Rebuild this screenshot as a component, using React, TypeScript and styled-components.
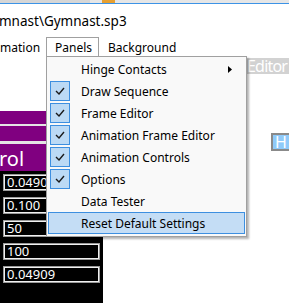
import React from "react";
import styled, { createGlobalStyle } from "styled-components";

const GlobalStyle = createGlobalStyle`
  html, body {
    margin: 0;
    padding: 0;
    background: #ffffff;
  }
  body {
    font-family: "Noto Sans", "Open Sans", sans-serif;
  }
`;

const menuItems = [
  { label: "Hinge Contacts", checked: false, submenu: true },
  { label: "Draw Sequence", checked: true },
  { label: "Frame Editor", checked: true },
  { label: "Animation Frame Editor", checked: true },
  { label: "Animation Controls", checked: true },
  { label: "Options", checked: true },
  { label: "Data Tester", checked: false },
  { label: "Reset Default Settings", checked: false, active: true },
];

const values = ["0.04909", "0.100", "50", "100", "0.04909"];

const Check = () => (
  <svg width="10" height="8" viewBox="0 0 10 8">
    <path d="M1 4 L4 7 L9 1" fill="none" stroke="#1a1a1a" strokeWidth="1.4" />
  </svg>
);

const Arrow = () => (
  <svg width="4" height="7" viewBox="0 0 4 7">
    <path d="M0 0 L4 3.5 L0 7 Z" fill="#000" />
  </svg>
);

const App: React.FC = () => {
  return (
    <>
      <GlobalStyle />
      <Window>
        <TopStrip>
          <StripDark />
          <StripLight>
            <OrangeMark />
          </StripLight>
        </TopStrip>
        <TitleRow>mnast\Gymnast.sp3</TitleRow>
        <MenuBar>
          <MenuBarItem $width={46}>mation</MenuBarItem>
          <MenuBarTab>Panels</MenuBarTab>
          <MenuBarItem>Background</MenuBarItem>
        </MenuBar>
        <Body>
          <LeftColumn>
            <WhiteSpace />
            <PurpleBar $height={13} />
            <BarGap $height={2} />
            <PurpleBar $height={15} />
            <BarGap $height={3} />
            <PurpleBar $height={27}>
              <PurpleText>rol</PurpleText>
            </PurpleBar>
            <BlackPanel>
              {values.map((v, i) => (
                <ValueBox key={i}>{v}</ValueBox>
              ))}
            </BlackPanel>
          </LeftColumn>
          <RightArea>
            <EditorLabel>Editor</EditorLabel>
            <HBoxRow>
              <HBox>H</HBox>
            </HBoxRow>
          </RightArea>
        </Body>
        <DropMenu>
          {menuItems.map((item) => (
            <MenuItem key={item.label} $active={!!item.active}>
              <CheckCell $checked={item.checked}>
                {item.checked && <Check />}
              </CheckCell>
              <ItemLabel>{item.label}</ItemLabel>
              {item.submenu && (
                <SubArrow>
                  <Arrow />
                </SubArrow>
              )}
            </MenuItem>
          ))}
        </DropMenu>
      </Window>
    </>
  );
};

export default App;

const Window = styled.div`
  position: relative;
  width: 289px;
  height: 303px;
  overflow: hidden;
  background: #ffffff;
`;

const TopStrip = styled.div`
  display: flex;
  height: 3px;
  border-bottom: 1px solid #3c93e6;
`;

const StripDark = styled.div`
  width: 90px;
  background: #d6d6d6;
`;

const StripLight = styled.div`
  flex: 1;
  background: #e6e6e6;
  padding-left: 12px;
`;

const OrangeMark = styled.div`
  width: 13px;
  height: 3px;
  background: #e8a030;
`;

const TitleRow = styled.div`
  height: 32px;
  display: flex;
  align-items: center;
  padding-top: 1px;
  box-sizing: border-box;
  margin-left: -1px;
  font-size: 13.5px;
  color: #000;
`;

const MenuBar = styled.div`
  display: flex;
  height: 20px;
  margin-top: 1px;
  align-items: stretch;
`;

const MenuBarItem = styled.div<{ $width?: number }>`
  display: flex;
  align-items: center;
  box-sizing: border-box;
  width: ${(p) => (p.$width ? `${p.$width}px` : "auto")};
  padding: 0 0 0 ${(p) => (p.$width ? 0 : 9)}px;
  font-size: 12px;
  color: #000;
`;

const MenuBarTab = styled.div`
  display: flex;
  align-items: center;
  width: 53px;
  box-sizing: border-box;
  border: 1px solid #a0a0a0;
  border-bottom: none;
  background: #ffffff;
  padding-left: 8px;
  font-size: 12px;
  color: #000;
`;

const Body = styled.div`
  display: flex;
  height: 247px;
`;

const LeftColumn = styled.div`
  width: 103px;
  flex-shrink: 0;
  display: flex;
  flex-direction: column;
`;

const WhiteSpace = styled.div`
  height: 54px;
  background: #ffffff;
`;

const PurpleBar = styled.div<{ $height: number }>`
  height: ${(p) => p.$height}px;
  background: #800080;
  display: flex;
  align-items: center;
`;

const BarGap = styled.div<{ $height: number }>`
  height: ${(p) => p.$height}px;
  background: #e4e4e4;
`;

const PurpleText = styled.span`
  color: #ffffff;
  font-size: 20px;
  margin-left: -1px;
  margin-top: 2px;
`;

const BlackPanel = styled.div`
  flex: 1;
  background: #000000;
  display: flex;
  flex-direction: column;
  gap: 6px;
  padding: 3px 3px 0 3px;
`;

const ValueBox = styled.div`
  height: 17px;
  box-sizing: border-box;
  border: 1px solid #9a9a9a;
  box-shadow: inset 0 0 0 1px #f0f0f0;
  color: #ffffff;
  font-size: 13px;
  line-height: 15px;
  padding-left: 3px;
`;

const RightArea = styled.div`
  flex: 1;
  min-width: 0;
  display: flex;
  flex-direction: column;
`;

const EditorLabel = styled.div`
  margin-top: 1px;
  margin-left: 140px;
  height: 16px;
  background: #d2d2d2;
  color: #ffffff;
  font-size: 16px;
  letter-spacing: -0.8px;
  line-height: 16px;
  padding-left: 4px;
  white-space: nowrap;
`;

const HBoxRow = styled.div`
  display: flex;
  justify-content: flex-end;
  margin-top: 59px;
  margin-right: -6px;
`;

const HBox = styled.div`
  width: 24px;
  height: 18px;
  box-sizing: border-box;
  border: 2px solid #8a8a8a;
  background: #8fcafa;
  color: #ffffff;
  font-size: 16px;
  line-height: 14px;
  padding-left: 2px;
`;

const DropMenu = styled.div`
  position: absolute;
  left: 46px;
  top: 56px;
  width: 201px;
  box-sizing: border-box;
  padding: 1px 0 2px;
  background: #f9f9f9;
  border: 1px solid #a0a0a0;
  box-shadow: 2px 2px 2px rgba(0, 0, 0, 0.3);
`;

const MenuItem = styled.div<{ $active: boolean }>`
  position: relative;
  display: flex;
  align-items: center;
  height: 22px;
  box-sizing: border-box;
  margin: 0 1px 0 1px;
  border: 1px solid ${(p) => (p.$active ? "#3d8fe0" : "transparent")};
  background: ${(p) => (p.$active ? "#c4ddf5" : "transparent")};
  font-size: 12px;
  color: #000;
`;

const CheckCell = styled.div<{ $checked: boolean }>`
  width: 20px;
  height: 20px;
  box-sizing: border-box;
  margin-left: 1px;
  display: flex;
  align-items: center;
  justify-content: center;
  border: 1px solid ${(p) => (p.$checked ? "#3d8fe0" : "transparent")};
  background: ${(p) => (p.$checked ? "#bcdaf5" : "transparent")};
`;

const ItemLabel = styled.span`
  margin-left: 11px;
  flex: 1;
`;

const SubArrow = styled.span`
  display: flex;
  margin-right: 12px;
`;
